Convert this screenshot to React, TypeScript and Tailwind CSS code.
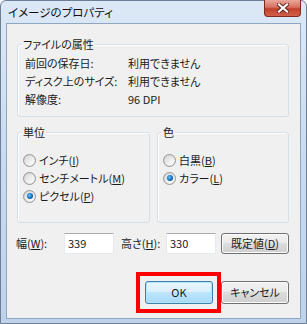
import React from 'react'

const font = { fontFamily: '"Noto Sans CJK JP", "Noto Sans", sans-serif' }

function Radio({ checked, children }: { checked?: boolean; children: React.ReactNode }) {
  return (
    <div className="flex items-center gap-[3px] h-[18px]">
      <span className="relative w-[13px] h-[13px] rounded-full border border-[#969696] bg-gradient-to-br from-[#cfcfcf] to-[#f6f6f6] flex items-center justify-center">
        <span className="w-[9px] h-[9px] rounded-full bg-gradient-to-br from-[#dadada] to-[#ffffff] flex items-center justify-center">
          {checked && (
            <span className="w-[6px] h-[6px] rounded-full bg-[radial-gradient(circle_at_40%_40%,#5fc2ff,#0a66b8_60%,#153d7a)]" />
          )}
        </span>
      </span>
      <span>{children}</span>
    </div>
  )
}

function Group({ title, className, children }: { title: string; className?: string; children: React.ReactNode }) {
  return (
    <div className={`relative border border-[#d5dfe5] rounded-[3px] shadow-[inset_1px_1px_0_#ffffff] ${className ?? ''}`}>
      <span className="absolute -top-[8px] left-[4px] px-[1px] bg-[#f0f0f0] leading-[14px]">{title}</span>
      {children}
    </div>
  )
}

function Button({ children, primary, className }: { children: React.ReactNode; primary?: boolean; className?: string }) {
  return (
    <div
      className={`flex items-center justify-center rounded-[3px] border ${
        primary
          ? 'border-[#3c7fb1] bg-[linear-gradient(#eaf6fd_0%,#d9f0fc_45%,#bee6fd_50%,#a7d9f5_100%)] shadow-[inset_0_0_0_1px_#b6e4fb]'
          : 'border-[#707070] bg-[linear-gradient(#f2f2f2_0%,#ebebeb_45%,#dddddd_50%,#cfcfcf_100%)] shadow-[inset_0_0_0_1px_#fcfcfc]'
      } ${className ?? ''}`}
    >
      {children}
    </div>
  )
}

export default function App() {
  return (
    <div
      className="w-[307px] h-[324px] flex flex-col rounded-t-[6px] border border-[#6d7f95] bg-gradient-to-b from-[#dce8f6] via-[#c9dbf0] to-[#bed2ea] text-[11px] text-[#1a1a1a] [font-feature-settings:'palt']"
      style={font}
    >
      <div className="h-[22px] flex items-start justify-between pl-[7px] pr-[5px]">
        <span className="mt-[3px] leading-[16px] text-[11.5px] text-[#111]">イメージのプロパティ</span>
        <div className="w-[37px] h-[17px] -mt-[1px] rounded-b-[4px] border border-[#7b2a20] border-t-0 bg-[linear-gradient(#e9a89c_0%,#d8705f_45%,#c2402c_55%,#d2604a_100%)] flex items-center justify-center">
          <svg width="12" height="10" viewBox="0 0 12 10">
            <path d="M2 1.5 L10 8.5 M10 1.5 L2 8.5" stroke="#5a2018" strokeWidth="4" strokeLinecap="square" />
            <path d="M2 1.5 L10 8.5 M10 1.5 L2 8.5" stroke="#ffffff" strokeWidth="2.2" strokeLinecap="square" />
          </svg>
        </div>
      </div>

      <div className="mx-[5px] mb-[4px] flex-1 border border-[#8fa6c1] bg-[#f0f0f0] flex flex-col pl-[10px] pr-[11px]">
        <Group title="ファイルの属性" className="mt-[20px] h-[73px] pl-[7px] pt-[9px]">
          <div className="flex leading-[18px]">
            <span className="w-[103px]">前回の保存日:</span>
            <span>利用できません</span>
          </div>
          <div className="flex leading-[18px]">
            <span className="w-[103px]">ディスク上のサイズ:</span>
            <span>利用できません</span>
          </div>
          <div className="flex leading-[18px]">
            <span className="w-[103px]">解像度:</span>
            <span>96 DPI</span>
          </div>
        </Group>

        <div className="flex gap-[7px] mt-[15px]">
          <Group title="単位" className="w-[133px] h-[91px] pl-[5px] pt-[18px]">
            <Radio>
              インチ(<u>I</u>)
            </Radio>
            <Radio>
              センチメートル(<u>M</u>)
            </Radio>
            <Radio checked>
              ピクセル(<u>P</u>)
            </Radio>
          </Group>
          <Group title="色" className="flex-1 h-[91px] pl-[5px] pt-[18px]">
            <Radio>
              白黒(<u>B</u>)
            </Radio>
            <Radio checked>
              カラー(<u>L</u>)
            </Radio>
          </Group>
        </div>

        <div className="flex items-center mt-[10px] -ml-[1px]">
          <span className="w-[48px]">
            幅(<u>W</u>):
          </span>
          <div className="w-[50px] h-[21px] bg-white border border-[#e3e9ef] border-t-[#abadb3] pl-[3px] leading-[18px]">339</div>
          <span className="ml-[7px] w-[45px]">
            高さ(<u>H</u>):
          </span>
          <div className="w-[50px] h-[21px] bg-white border border-[#e3e9ef] border-t-[#abadb3] pl-[3px] leading-[18px]">330</div>
          <Button className="ml-auto w-[68px] h-[21px]">
            既定値(<u>D</u>)
          </Button>
        </div>

        <div className="flex justify-end gap-[8px] mt-[27px]">
          <div className="relative">
            <Button primary className="w-[68px] h-[23px]">
              OK
            </Button>
            <div className="absolute -left-[9px] -top-[9px] -right-[8px] -bottom-[9px] border-[4px] border-[#ff0000]" />
          </div>
          <Button className="w-[68px] h-[23px]">キャンセル</Button>
        </div>
      </div>
    </div>
  )
}
